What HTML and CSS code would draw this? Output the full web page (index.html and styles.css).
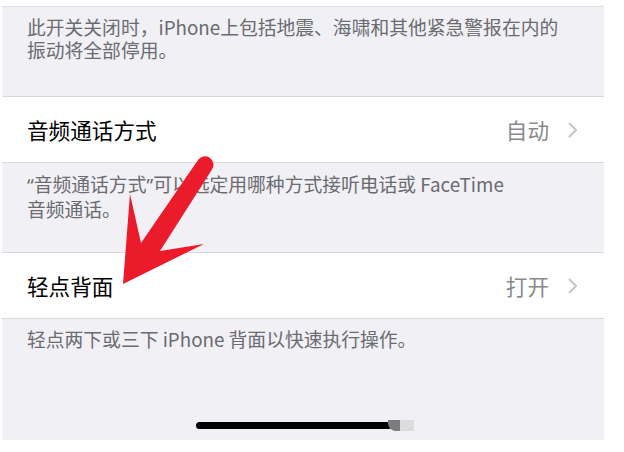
FILE: index.html
```html
<!DOCTYPE html>
<html lang="zh-CN">
<head>
<meta charset="utf-8">
<link rel="stylesheet" href="styles.css">
</head>
<body>
<div class="screen">
  <div class="footer footer-first">
    <p>此开关关闭时，iPhone上包括地震、海啸和其他紧急警报在内的<br>振动将全部停用。</p>
  </div>
  <div class="row">
    <span class="label">音频通话方式</span>
    <span class="value">自动</span>
    <svg class="chevron" width="10" height="16" viewBox="0 0 10 16"><path d="M1.5 1.5 L8 8 L1.5 14.5" fill="none" stroke="#c4c4c8" stroke-width="2" stroke-linecap="round" stroke-linejoin="round"/></svg>
  </div>
  <div class="footer footer-second">
    <p><span class="quote">“</span>音频通话方式<span class="quote">”</span>可以选定用哪种方式接听电话或 FaceTime<br>音频通话。</p>
  </div>
  <div class="row">
    <span class="label">轻点背面</span>
    <span class="value">打开</span>
    <svg class="chevron" width="10" height="16" viewBox="0 0 10 16"><path d="M1.5 1.5 L8 8 L1.5 14.5" fill="none" stroke="#c4c4c8" stroke-width="2" stroke-linecap="round" stroke-linejoin="round"/></svg>
  </div>
  <div class="footer footer-last">
    <p>轻点两下或三下 iPhone 背面以快速执行操作。</p>
    <div class="home">
      <span class="home-bar"></span>
      <span class="home-smudge"></span>
      <span class="home-smudge light"></span>
    </div>
  </div>
</div>
<svg class="arrow" width="624" height="452" viewBox="0 0 624 452">
  <path d="M123 284 L130 194 L141 243 L198 160 A8 8 0 0 1 212 169.5 L160 251 L204 244 Z" fill="#ec1b2c"/>
</svg>
</body>
</html>
```
FILE: styles.css
```css
html, body {
  margin: 0;
  padding: 0;
  background: #ffffff;
}

body {
  width: 624px;
  height: 452px;
  overflow: hidden;
  position: relative;
  font-family: "Noto Sans CJK SC", "Noto Sans", sans-serif;
}

.screen {
  width: 602px;
  margin-left: 2px;
  margin-top: 6px;
  border-top: 1px solid #dedee2;
  background: #f0f0f5;
}

.footer {
  box-sizing: border-box;
  padding-left: 25px;
  color: #6b6b70;
  font-size: 18.8px;
  line-height: 23px;
}

.footer p {
  margin: 0;
}

.quote {
  font-family: "Noto Sans", sans-serif;
}

.footer-first {
  height: 89px;
  padding-top: 8px;
}

.footer-second {
  height: 89px;
  padding-top: 9px;
}

.footer-last {
  height: 121px;
  padding-top: 8px;
  display: flex;
  flex-direction: column;
}

.row {
  box-sizing: border-box;
  height: 67px;
  background: #ffffff;
  border-top: 1px solid #d9d9dd;
  border-bottom: 1px solid #d9d9dd;
  display: flex;
  align-items: center;
  padding: 0 26px 0 25px;
}

.label {
  flex: 1;
  font-size: 21.6px;
  color: #000000;
}

.value {
  font-size: 21.6px;
  color: #8a8a8e;
  margin-right: 19px;
}

.chevron {
  display: block;
}

.home {
  margin-top: auto;
  margin-bottom: 9px;
  margin-left: 169px;
  display: flex;
  align-items: center;
  height: 11px;
}

.home-bar {
  display: block;
  width: 196px;
  height: 7px;
  border-radius: 4px;
  background: #000000;
}

.home-smudge {
  display: block;
  width: 12px;
  height: 11px;
  margin-left: -4px;
  background: #7c7c7c;
  border-bottom-left-radius: 8px;
}

.home-smudge.light {
  margin-left: 0;
  width: 14px;
  background: #dcdcdc;
  border-radius: 0;
}

.arrow {
  position: absolute;
  top: 0;
  left: 0;
  pointer-events: none;
}
```
